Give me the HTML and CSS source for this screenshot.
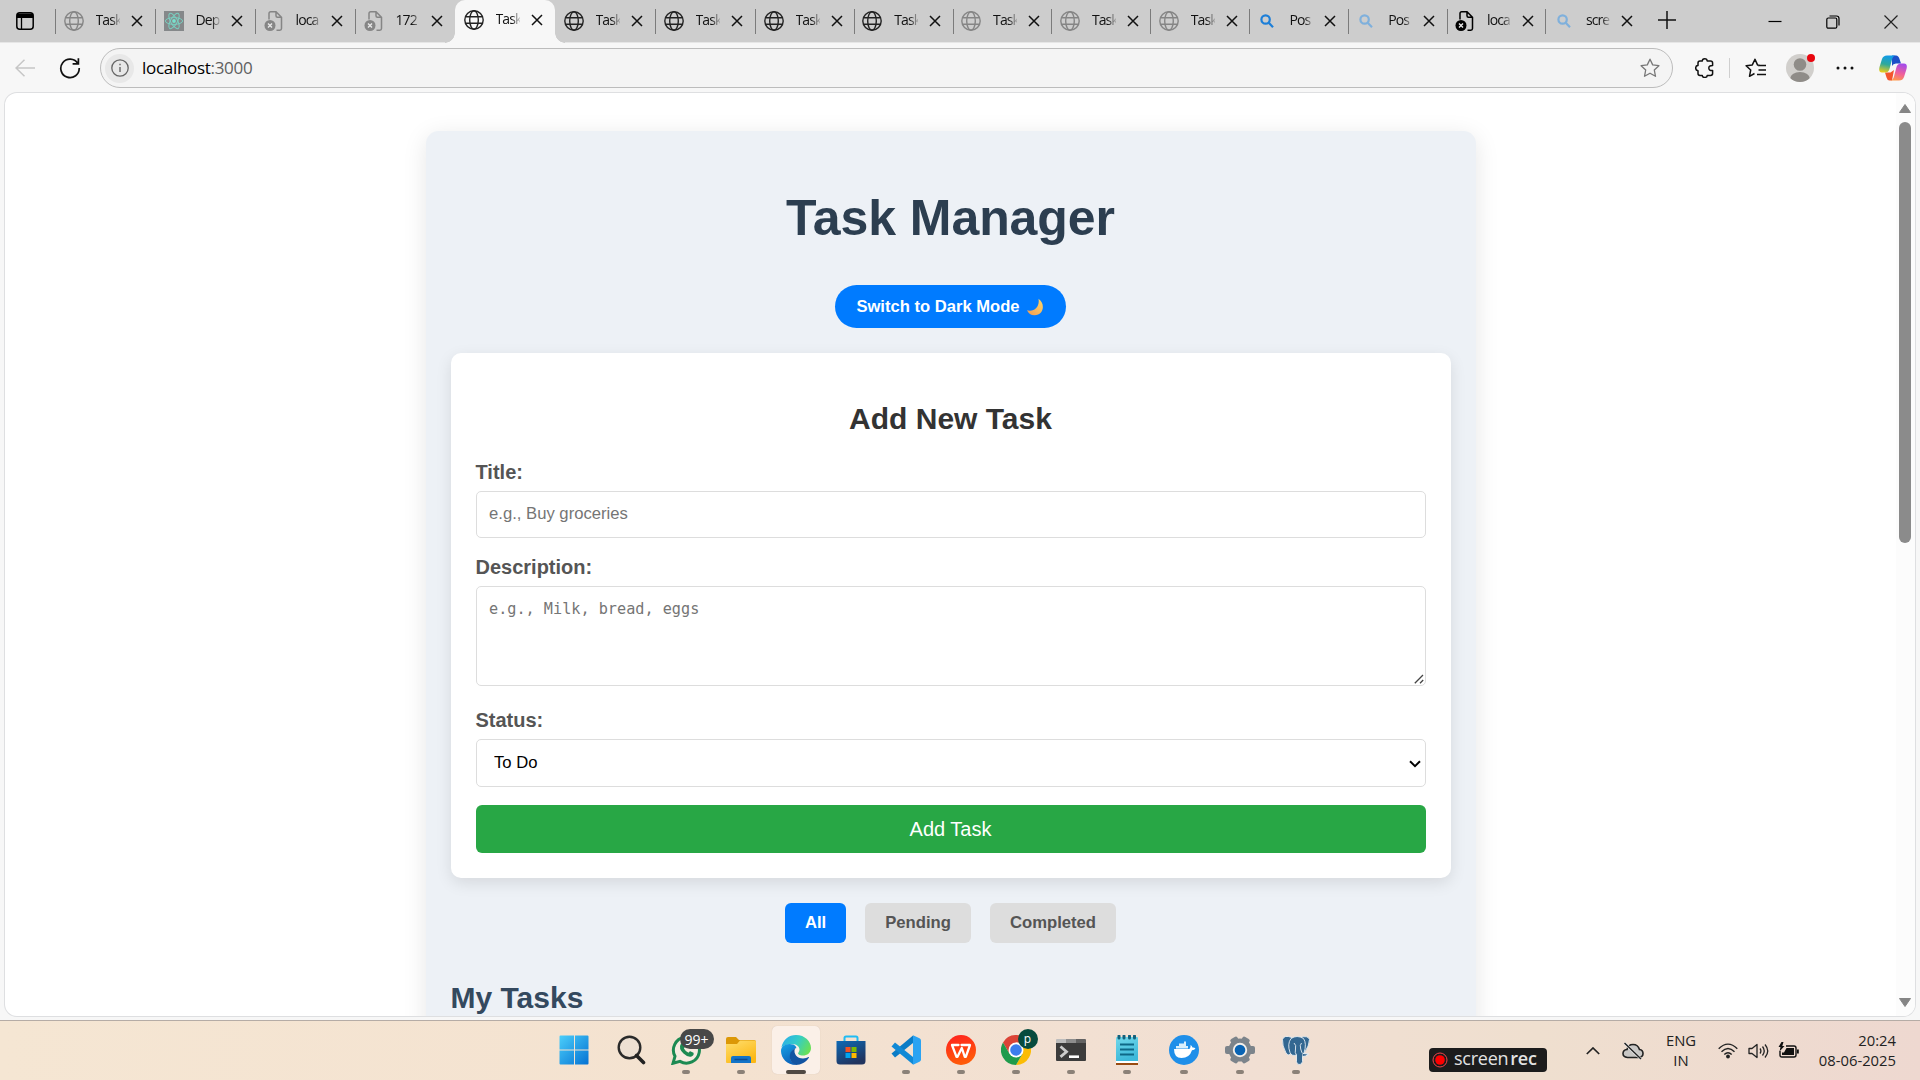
FILE: index.html
```html
<!DOCTYPE html>
<html lang="en">
<head>
<meta charset="utf-8">
<title>Task Manager</title>
<link rel="stylesheet" href="styles.css">
</head>
<body>
<svg class="defs" width="0" height="0" aria-hidden="true">
  <symbol id="globe" viewBox="0 0 20 20"><g fill="none" stroke="currentColor" stroke-width="1.4"><circle cx="10" cy="10" r="9.2"/><ellipse cx="10" cy="10" rx="4.3" ry="9.2"/><path d="M1.6 6.8h16.8M1.6 13.2h16.8"/></g></symbol>
  <symbol id="doc" viewBox="0 0 20 20"><path d="M5 8.500V2.500Q5 .8 6.700 .8H12L17.500 6.300V17.500Q17.500 19.200 15.800 19.200H12.500M12 1V4.800Q12 6.300 13.500 6.300H17.300" fill="none" stroke="currentColor" stroke-width="1.500"/><circle cx="6" cy="14.500" r="5.500" fill="currentColor"/><path d="M4 12.500l4 4M8 12.500l-4 4" stroke="#e8e8e8" stroke-width="1.400"/></symbol>
  <symbol id="react" viewBox="0 0 20 20"><path fill="#85888a" d="M0 0h20v20H0z"/><g fill="none" stroke="#79cfc0" stroke-width="1"><ellipse cx="10" cy="10" rx="8.600" ry="3.400"/><ellipse cx="10" cy="10" rx="8.600" ry="3.400" transform="rotate(60 10 10)"/><ellipse cx="10" cy="10" rx="8.600" ry="3.400" transform="rotate(120 10 10)"/></g><circle cx="10" cy="10" r="1.900" fill="#79e0cc"/></symbol>
  <symbol id="find" viewBox="0 0 20 20"><g fill="none" stroke="currentColor" stroke-width="2.200"><circle cx="8.600" cy="8.500" r="4.200"/><path d="M11.700 11.800l4.300 4.400"/></g></symbol>
  <symbol id="x" viewBox="0 0 12 12"><path d="M1 1l10 10M11 1L1 11" fill="none" stroke="currentColor" stroke-width="1.500"/></symbol>
</svg>

<header class="tabstrip">
  <div class="workspace"><svg width="18" height="18" viewBox="0 0 18 18"><rect x=".8" y=".8" width="16.400" height="16.400" rx="3" fill="none" stroke="#000" stroke-width="1.500"/><path d="M1 1.500h16v4.500H1z"/><path d="M5.500 6v11" stroke="#000" stroke-width="1.300"/></svg></div>
  <div class="tab"><svg class="fav dim"><use href="#globe"/></svg><span class="name">Task</span><svg class="close"><use href="#x"/></svg></div>
  <div class="tab"><svg class="fav"><use href="#react"/></svg><span class="name">Dep</span><svg class="close"><use href="#x"/></svg></div>
  <div class="tab"><svg class="fav dim"><use href="#doc"/></svg><span class="name">loca</span><svg class="close"><use href="#x"/></svg></div>
  <div class="tab"><svg class="fav dim"><use href="#doc"/></svg><span class="name">172</span><svg class="close"><use href="#x"/></svg></div>
  <div class="tab active"><svg class="fav"><use href="#globe"/></svg><span class="name">Task</span><svg class="close"><use href="#x"/></svg></div>
  <div class="tab after-active"><svg class="fav"><use href="#globe"/></svg><span class="name">Task</span><svg class="close"><use href="#x"/></svg></div>
  <div class="tab"><svg class="fav"><use href="#globe"/></svg><span class="name">Task</span><svg class="close"><use href="#x"/></svg></div>
  <div class="tab"><svg class="fav"><use href="#globe"/></svg><span class="name">Task</span><svg class="close"><use href="#x"/></svg></div>
  <div class="tab"><svg class="fav"><use href="#globe"/></svg><span class="name">Task</span><svg class="close"><use href="#x"/></svg></div>
  <div class="tab"><svg class="fav dim"><use href="#globe"/></svg><span class="name">Task</span><svg class="close"><use href="#x"/></svg></div>
  <div class="tab"><svg class="fav dim"><use href="#globe"/></svg><span class="name">Task</span><svg class="close"><use href="#x"/></svg></div>
  <div class="tab"><svg class="fav dim"><use href="#globe"/></svg><span class="name">Task</span><svg class="close"><use href="#x"/></svg></div>
  <div class="tab"><svg class="fav blue"><use href="#find"/></svg><span class="name">Pos</span><svg class="close"><use href="#x"/></svg></div>
  <div class="tab"><svg class="fav pale"><use href="#find"/></svg><span class="name">Pos</span><svg class="close"><use href="#x"/></svg></div>
  <div class="tab"><svg class="fav black"><use href="#doc"/></svg><span class="name">loca</span><svg class="close"><use href="#x"/></svg></div>
  <div class="tab"><svg class="fav pale"><use href="#find"/></svg><span class="name">scre</span><svg class="close"><use href="#x"/></svg></div>
  <div class="newtab"><svg width="18" height="18" viewBox="0 0 18 18"><path d="M9 0v18M0 9h18" stroke="#111" stroke-width="1.500"/></svg></div>
  <div class="winctl">
    <svg width="14" height="14" viewBox="0 0 14 14"><path d="M.5 6.500h13" stroke="#000" stroke-width="1.200"/></svg>
    <svg width="14" height="14" viewBox="0 0 14 14"><g fill="none" stroke="#000" stroke-width="1.200"><rect x=".8" y="3" width="10" height="10.200" rx="1.500"/><path d="M3.500 1h7Q13 1 13 3.500v7"/></g></svg>
    <svg width="14" height="14" viewBox="0 0 14 14"><path d="M.5 .5l13 13M13.500 .5l-13 13" stroke="#222" stroke-width="1.200"/></svg>
  </div>
</header>

<nav class="toolbar">
  <svg class="back" width="20" height="18" viewBox="0 0 20 18"><path d="M9.500 .8L1 9l8.500 8.200M1 9h19" fill="none" stroke="#c6c6c6" stroke-width="1.500"/></svg>
  <svg class="reload" width="22" height="22" viewBox="0 0 22 22"><path d="M18.800 6.500A9.200 9.200 0 1 0 20.200 11M19.400 1.200V6.800H13.600" fill="none" stroke="#111" stroke-width="1.700"/></svg>
  <div class="address">
    <span class="info"><svg width="18" height="18" viewBox="0 0 18 18"><circle cx="9" cy="9" r="8.200" fill="none" stroke="#666" stroke-width="1.300"/><path d="M9 8v5M9 4.800v1.500" stroke="#666" stroke-width="1.400"/></svg></span>
    <span class="url">localhost<span class="port">:3000</span></span>
    <svg width="20" height="20" viewBox="0 0 20 20"><path d="M10 1.200l2.700 5.700 6.200.8-4.600 4.300 1.200 6.300L10 15.200l-5.500 3.100 1.200-6.300L1.100 7.700l6.200-.8z" fill="none" stroke="#777" stroke-width="1.300" stroke-linejoin="round"/></svg>
  </div>
  <svg class="ext" width="20" height="20" viewBox="0 0 20 20"><path d="M3 5Q3 3 5 3H7.300Q7.300 .8 9.700 .8T12.200 3H15.500Q17.600 3 17.600 5V7.500Q13.800 7.400 13.800 10.100T17.600 12.600V15.500Q17.600 17.400 15.500 17.400H12.200Q12.200 19.400 9.700 19.400T7.300 17.400H5Q3 17.400 3 15.500V12.700Q.7 12.600 .7 10.100T3 7.600Z" fill="none" stroke="#111" stroke-width="1.500" stroke-linejoin="round"/></svg>
  <i class="sep"></i>
  <svg class="favs" width="21" height="20" viewBox="0 0 21 20"><path d="M14.500 7.200L12.500 6.900 10 1.200 7.300 6.900 1.100 7.700 5.700 12 4.500 18.300 9.500 15.500M13 7.500h8M13.500 12h7.500M12 16.500h9" fill="none" stroke="#111" stroke-width="1.500" stroke-linejoin="round"/></svg>
  <svg class="avatar" width="30" height="30" viewBox="0 0 30 30"><defs><clipPath id="av"><circle cx="14" cy="15" r="14"/></clipPath></defs><circle cx="14" cy="15" r="14" fill="#d1cfcc"/><g fill="#8f8c88" clip-path="url(#av)"><circle cx="14" cy="11.500" r="6.300"/><ellipse cx="14" cy="26" rx="10" ry="7"/></g><circle cx="25" cy="5" r="4" fill="#e8060f"/></svg>
  <svg class="more" width="18" height="4" viewBox="0 0 18 4"><g fill="#111"><circle cx="2" cy="2" r="1.500"/><circle cx="9" cy="2" r="1.500"/><circle cx="16" cy="2" r="1.500"/></g></svg>
  <svg class="copilot" width="28" height="26" viewBox="0 0 28 26">
    <defs>
      <linearGradient id="c1" x1=".4" y1="0" x2=".2" y2="1"><stop offset="0" stop-color="#119be8"/><stop offset=".5" stop-color="#2fa99a"/><stop offset="1" stop-color="#f5cf13"/></linearGradient>
      <linearGradient id="c2" x1=".6" y1="0" x2=".3" y2="1"><stop offset="0" stop-color="#a44bea"/><stop offset=".55" stop-color="#f0609a"/><stop offset="1" stop-color="#ff9a48"/></linearGradient>
    </defs>
    <path fill="#1c50c8" d="M13 .5h4Q19.500 .5 20.500 4L22 8.500h-5Q14 8.500 13 11z"/>
    <path fill="#f4552d" d="M6 17.500h5.500L15 15l-2 10.500h-2.500Q8.300 25.500 7.500 22.500z"/>
    <path fill="url(#c1)" d="M8 .5h8.500Q13.800 1 13 4.500L10.500 14q-1 3.500-4.500 3.500H3Q-.8 17.500 .5 12L3 4Q4.200 .5 8 .5z"/>
    <path fill="url(#c2)" d="M20 25.500h-8.500q2.700-.5 3.500-4L17.500 12q1-3.500 4.500-3.500h3q3.800 0 2.500 5.500L25 22q-1.200 3.500-5 3.500z"/>
  </svg>
</nav>

<div class="frame">
  <main class="page">
    <div class="container">
      <h1>Task Manager</h1>
      <button class="toggle">Switch to Dark Mode <svg width="18" height="18" viewBox="0 0 18 18"><defs><linearGradient id="mn" x1="1" y1="0" x2="0" y2="1"><stop offset="0" stop-color="#fbd86a"/><stop offset="1" stop-color="#f09a52"/></linearGradient></defs><path d="M12.500 .8C19.500 5.500 18 17 8.500 17.200 5 17.200 2.200 15.300 1 12.200 8 14.300 14 8.800 12.500 .8z" fill="url(#mn)"/></svg></button>
      <form class="card">
        <h2>Add New Task</h2>
        <label for="title">Title:</label>
        <input id="title" type="text" placeholder="e.g., Buy groceries">
        <label for="desc">Description:</label>
        <div class="field area"><textarea id="desc" placeholder="e.g., Milk, bread, eggs"></textarea><svg class="grip" width="10" height="10" viewBox="0 0 10 10"><path d="M.8 9.200L9 1M6 9.200L9.200 6" stroke="#444" stroke-width="1.300"/></svg></div>
        <label for="status">Status:</label>
        <div class="field"><select id="status"><option>To Do</option></select><svg class="chev" width="12" height="8" viewBox="0 0 12 8"><path d="M1 1.200l5 5 5-5" fill="none" stroke="#000" stroke-width="2"/></svg></div>
        <button class="add" type="button">Add Task</button>
      </form>
      <div class="filters"><button class="on">All</button><button>Pending</button><button>Completed</button></div>
      <h2 class="mine">My Tasks</h2>
    </div>
  </main>
  <aside class="scroll">
    <svg width="14" height="11" viewBox="0 0 14 11"><path d="M7 1.500L12.500 9.500H1.500z" fill="#858585" stroke="#858585" stroke-linejoin="round"/></svg>
    <i class="thumb"></i>
    <svg class="down" width="14" height="11" viewBox="0 0 14 11"><path d="M7 9.500L12.500 1.500H1.500z" fill="#858585" stroke="#858585" stroke-linejoin="round"/></svg>
  </aside>
</div>

<footer class="taskbar">
  <div class="apps">
    <div class="app"><svg viewBox="0 0 30 30"><defs><linearGradient id="w" gradientUnits="userSpaceOnUse" x1="0" y1="0" x2="30" y2="30"><stop offset="0" stop-color="#4cd0fb"/><stop offset="1" stop-color="#0370d2"/></linearGradient></defs><path fill="url(#w)" d="M1.500 .5H15V14.500H.5V1.500q0-1 1-1zM16 .5h12.500q1 0 1 1v13H16zM.5 15.500H15v14H1.500q-1 0-1-1zM16 15.500h13.500v13q0 1-1 1H16z"/></svg></div>
    <div class="app"><svg viewBox="0 0 30 30"><circle cx="13.500" cy="12.500" r="10.800" fill="#e7ddd3" fill-opacity=".6" stroke="#2a2a2a" stroke-width="2.400"/><path d="M20.500 20.500l7 7" stroke="#222" stroke-width="3.600" stroke-linecap="round"/></svg></div>
    <div class="app run"><svg viewBox="0 0 30 30"><path d="M2 28.300l2-7A13 13 0 1 1 9 26.400z" fill="#f7ebe0" stroke="#1c8a52" stroke-width="3"/><path d="M10 8.500q2-1.500 3 .8l.8 2q.4 1-.9 2.200 1.800 3.200 4.600 4.200 1.400-1.800 2.300-1.300l2.700 1.400q.8 2.700-2 3.700-3.800 1-8-3Q7 13.500 10 8.500z" fill="#1c8a52"/></svg><span class="badge count">99+</span></div>
    <div class="app run"><svg viewBox="0 0 30 30"><defs><linearGradient id="fo" x2=".6" y2="1"><stop offset="0" stop-color="#ffdf70"/><stop offset="1" stop-color="#fcb814"/></linearGradient></defs><path fill="#dc9807" d="M0 4q0-2 2-2h8l3 3h15q2 0 2 2v4H0z"/><path fill="url(#fo)" d="M0 9h11l3-3.500h14.500Q30 5.500 30 7v20q0 1-1 1H1q-1 0-1-1z"/><path fill="#1374c8" d="M5 28v-5q0-2 2-2h16q2 0 2 2v5z"/><path stroke="#0c4c93" stroke-width="1.500" d="M8.500 24.500h13"/></svg></div>
    <div class="app run current"><svg viewBox="0 0 30 30"><defs><linearGradient id="e1" x1="0" y1=".2" x2="1" y2=".6"><stop offset="0" stop-color="#2badea"/><stop offset=".5" stop-color="#34cdc7"/><stop offset="1" stop-color="#69e055"/></linearGradient><linearGradient id="e2" x2=".4" y2="1"><stop offset="0" stop-color="#16a4e7"/><stop offset="1" stop-color="#0c63bb"/></linearGradient></defs><path fill="url(#e1)" d="M.4 12.500C2 4.500 8 0 15 0c9 0 15 6.500 15 13 0 5-4 7.500-8 7.500-3.500 0-6-1.500-4.500-3 3-4-1-9-7-8.500C6 9.300 2 10.500 .4 12.500z"/><path fill="url(#e2)" d="M12.500 9.500C5 7.500 0 11 0 16c0 7 6 14 15 14-5-2-7-7-5-11.500 1-3 3-4.500 5.500-5.500Q15 10.500 12.500 9.500z"/><path fill="#1254a2" d="M14 13.500c-2 5 2 10 8 10 2.500 0 4-.8 5.500-1.500.5-.2.700.2.500.6C25 27.500 20 30 15 30c-7-1.500-9-13-1-16.500z"/></svg></div>
    <div class="app"><svg viewBox="0 0 30 30"><defs><linearGradient id="st" x2=".5" y2="1"><stop offset="0" stop-color="#0d69b5"/><stop offset="1" stop-color="#21345f"/></linearGradient></defs><path d="M8.500 7V3q0-1.500 1.500-1.500h10q1.500 0 1.500 1.500v4" fill="none" stroke="#20bcf4" stroke-width="2"/><path fill="url(#st)" d="M.5 6h29v20q0 3.500-3.500 3.500H4Q.5 29.500 .5 26z"/><path fill="#f25022" d="M9.500 12h5v5h-5z"/><path fill="#7fba00" d="M15.500 12h5v5h-5z"/><path fill="#00a4ef" d="M9.500 18h5v5h-5z"/><path fill="#ffb900" d="M15.500 18h5v5h-5z"/></svg></div>
    <div class="app run"><svg viewBox="0 0 30 30"><path fill="#0a7cc6" d="M.5 18.500L22 .5v7.500L4 22.500z"/><path fill="#1089d6" d="M.5 11.500L4 7.500 22 22v7.500z"/><path fill="#2ba3f2" d="M22 .3l6.500 3Q30 4 30 5.500v19q0 1.500-1.500 2.200L22 29.700z"/></svg></div>
    <div class="app run"><svg viewBox="0 0 30 30"><defs><linearGradient id="wp" x2=".3" y2="1"><stop offset="0" stop-color="#ff2020"/><stop offset="1" stop-color="#ff5a08"/></linearGradient></defs><circle cx="15" cy="15" r="15" fill="url(#wp)"/><path d="M12.500 10H6l4.500 11.800h1L15.800 13l3 8.800h1L24 10h-8.500" fill="none" stroke="#fff" stroke-width="2.300" stroke-linejoin="round" stroke-linecap="round"/></svg></div>
    <div class="app run"><svg viewBox="0 0 30 30"><path fill="#db4437" d="M2 7.500A15 15 0 0 1 28 7.500H15L8.500 18.800z"/><path fill="#fbbc05" d="M28 7.500A15 15 0 0 1 15 30l6.500-11.200L21 7.500z"/><path fill="#1f9b4c" d="M2 7.500A15 15 0 0 0 15 30l6.500-11.200H8.500z"/><circle cx="15" cy="15" r="7.500" fill="#fff"/><circle cx="15" cy="15" r="5.800" fill="#3b7ded"/></svg><span class="badge user">p</span></div>
    <div class="app run"><svg viewBox="0 0 30 30"><path fill="#3c3c3c" d="M0 5h30v20q0 1-1 1H1q-1 0-1-1z"/><path fill="#bdbdbd" d="M1 4h9v4H0V5q0-1 1-1z"/><path fill="#8e8e8e" d="M10 4h10v4H10z"/><path fill="#636363" d="M20 4h9q1 0 1 1v3H20z"/><path d="M4.500 11.500l6 5.200-6 5.200" fill="none" stroke="#ccc" stroke-width="2.800"/><path d="M13 21.700h10" stroke="#fff" stroke-width="2.600"/></svg></div>
    <div class="app run"><svg viewBox="0 0 30 30"><defs><linearGradient id="np" x2=".3" y2="1"><stop offset="0" stop-color="#71d8eb"/><stop offset="1" stop-color="#3db9da"/></linearGradient></defs><path fill="#984b11" d="M4 26h22v4H4z"/><path fill="#fff" d="M4 26h22v2H4z"/><path fill="url(#np)" d="M5 2h20q1 0 1 1v23H4V3q0-1 1-1z"/><path d="M7 1v2M12 1v2M17.500 1v2M22.500 1v2" stroke="#12617c" stroke-width="3" stroke-linecap="round"/><path d="M8 9.500h14M8 14.500h14M8 19.500h14" stroke="#0e6887" stroke-width="2"/></svg></div>
    <div class="app run"><svg viewBox="0 0 30 30"><circle cx="15" cy="15" r="15" fill="#1f8fe9"/><path fill="#fff" d="M5 14h15.500q1.500-2 1-4 1.500.8 2 2.500 1.500-.3 3 .7-1 2-3.500 2-2.500 7.800-10.500 7.800Q5 23 5 14z"/><path fill="#d9effc" d="M7 11h12v2.500H7zM10 8.500h7V11h-7zM15 6.500h2v2h-2z"/></svg></div>
    <div class="app run"><svg viewBox="0 0 30 30"><g fill="#7c848b"><circle cx="15" cy="15" r="11.500"/><rect x="11" y="1" width="8" height="28" rx="2" transform="rotate(30 15 15)"/><rect x="11" y="0" width="8" height="30" rx="2" transform="rotate(90 15 15)"/><rect x="11" y="1" width="8" height="28" rx="2" transform="rotate(150 15 15)"/></g><circle cx="15" cy="15" r="7.200" fill="#f3efea"/><circle cx="15" cy="15" r="5.300" fill="#0964b4"/></svg></div>
    <div class="app run"><svg viewBox="0 0 30 30"><g fill="#336791" stroke="#e8eef3" stroke-width=".9" stroke-linejoin="round"><path d="M11 2.500Q3-.5 1.500 4.500q-.5 6 3.500 13.500 2 3.500 4.500 1l3-4z"/><path d="M19 2.500q8-2.500 9.500 2 0 6-5.500 14l-5-3z"/><path d="M10 3.500q6-4 12.500 0 3.500 5 .5 14.500l-1.500 2v6.500q-.5 3.500-3.500 3-2.500-.5-2.500-3V20q-5 1.500-6.500-2.500Q6 9 10 3.500z"/><path d="M22 18.500l5.500.5q-2 2.500-6 2.500" stroke-width="1.200"/><path d="M13 8q2.500 2 1.500 6t1 6M20.500 8q-2 2-.8 6t1.800 4.500" fill="none"/></g></svg></div>
  </div>
  <div class="rec"><svg width="16" height="16" viewBox="0 0 16 16"><circle cx="8" cy="8" r="7" fill="none" stroke="#f0444a"/><circle cx="8" cy="8" r="4.800" fill="#f00"/></svg><span>screen<b>rec</b></span></div>
  <div class="tray">
    <svg class="up" width="14" height="8" viewBox="0 0 14 8"><path d="M.8 7L7 1l6.200 6" fill="none" stroke="#222" stroke-width="1.700"/></svg>
    <svg class="cloud" width="22" height="18" viewBox="0 0 22 18"><path d="M5.500 15.500Q1 15 1 11.500T5 7.500Q6 2.500 11 2.500t6.500 5Q21 8 21 11.500t-4 4z" fill="#c9c7c5" stroke="#222" stroke-width="1.600"/><path d="M2.500 1l16.500 16" stroke="#eee" stroke-width="2.500"/><path d="M2.500 1l16.500 16" stroke="#222" stroke-width="1.500"/></svg>
    <div class="lang"><span>ENG</span><span>IN</span></div>
    <svg class="wifi" width="20" height="16" viewBox="0 0 20 16"><g fill="none" stroke="#222" stroke-width="1.400"><path d="M.7 5.800Q10-3.500 19.300 5.800M3.500 8.800q6.500-6.500 13 0M6.300 11.500q3.700-3.700 7.400 0"/></g><circle cx="10" cy="13.500" r="1.900" fill="#222"/></svg>
    <svg class="vol" width="21" height="16" viewBox="0 0 21 16"><g fill="none" stroke="#222" stroke-width="1.300" stroke-linejoin="round"><path d="M1 5.500h3L9 1.500v13L4 10.500H1zM12 5.500q1.800 2.500 0 5M14.500 3.500q3.500 4.500 0 9M17 1.500q5.500 6.500 0 13"/></g></svg>
    <svg class="bat" width="21" height="17" viewBox="0 0 21 17"><path d="M8 4h8q2 0 2 2v7q0 2-2 2H4q-2 0-2-2V9" fill="none" stroke="#111" stroke-width="1.400"/><path d="M8.500 6H16v7H4V10.500h2zM19 7.500h1.800v4H19zM3.500 0L.5 5h2L1.500 9.500 6.500 4H4.300L5.500 0z" fill="#111"/></svg>
    <div class="clock"><span>20:24</span><span>08-06-2025</span></div>
  </div>
</footer>
</body>
</html>
```
FILE: styles.css
```css
* { box-sizing: border-box; }
body {
  margin: 0;
  width: 1920px;
  height: 1080px;
  overflow: hidden;
  display: flex;
  flex-direction: column;
  background: #f7f7f7;
  font-family: "Open Sans", "Noto Sans", sans-serif;
}
svg { display: block; flex: none; }
.defs { position: absolute; }

/* tab strip */
.tabstrip {
  height: 43px;
  flex: none;
  display: grid;
  grid-template-columns: 55px repeat(7, 100px) repeat(9, 98.8px) 45px 1fr;
  background: #cdcdcd;
  border-bottom: 1px solid #e6e6e6;
}
.workspace { display: flex; align-items: center; padding-left: 16px; padding-bottom: 2px; }
.tab {
  display: flex;
  align-items: center;
  padding: 0 0 2px 8.500px;
  background: linear-gradient(#7b7b7b, #7b7b7b) 0 9px / 1px 25px no-repeat;
  color: #111;
}
.tab.active {
  position: relative;
  height: 43px;
  padding-bottom: 3px;
  background: #f7f7f7;
  border-radius: 10px 10px 0 0;
}
.tab.active::before, .tab.active::after {
  content: "";
  position: absolute;
  bottom: 0;
  width: 10px;
  height: 10px;
}
.tab.active::before { left: -10px; background: radial-gradient(circle at 0 0, #cdcdcd 9.5px, #f7f7f7 10px); }
.tab.active::after { right: -10px; background: radial-gradient(circle at 100% 0, #cdcdcd 9.5px, #f7f7f7 10px); }
.tab.after-active { background: none; }
.fav { width: 20px; height: 20px; color: #222; }
.fav.dim { color: #858585; }
.fav.blue { color: #1d7fd8; }
.fav.pale { color: #7fb0dc; }
.fav.black { color: #000; }
.name {
  width: 24px;
  margin: -2px 0 0 12px;
  overflow: hidden;
  white-space: nowrap;
  font-size: 14px;
  letter-spacing: -.9px;
  line-height: 22px;
  -webkit-mask: linear-gradient(90deg, #000 65%, rgba(0, 0, 0, .15));
  mask: linear-gradient(90deg, #000 65%, rgba(0, 0, 0, .15));
}
.close { width: 12px; height: 12px; margin-left: 11px; color: #111; }
.newtab { display: flex; align-items: center; padding: 0 0 3px 14px; }
.winctl { display: flex; align-items: center; justify-content: flex-end; gap: 44px; padding-right: 22px; }

/* toolbar */
.toolbar { height: 50px; flex: none; display: flex; align-items: center; padding-left: 15px; }
.reload { margin-left: 24px; }
.address {
  width: 1573px;
  height: 40px;
  margin-left: 19px;
  padding: 0 12px 0 4px;
  display: flex;
  align-items: center;
  border: 1px solid #bcbcbc;
  border-radius: 20px;
  background: #f4f4f4;
}
.info { width: 29px; height: 29px; border-radius: 50%; background: #e8e8e8; display: grid; place-items: center; }
.url { flex: 1; margin: -2px 0 0 8px; font-size: 17px; letter-spacing: -.3px; color: #000; }
.port { color: #606060; }
.ext { margin-left: 22px; }
.sep { width: 1px; height: 20px; margin-left: 14px; background: #cfcfcf; }
.favs { margin-left: 15px; }
.avatar { margin-left: 20px; }
.more { margin-left: 20px; }
.copilot { margin-left: 25px; }

/* browser viewport */
.frame {
  height: 923px;
  flex: none;
  margin: 0 5px;
  display: flex;
  overflow: hidden;
  border-radius: 12px;
  background: #fff;
  box-shadow: 0 0 0 1px #dedfe1;
}
.page {
  flex: 1;
  padding-top: 38px;
  overflow: hidden;
  font-family: "Liberation Sans", Arial, sans-serif;
}
.container {
  width: 1050px;
  height: 1400px;
  margin: 0 auto;
  padding: 25px;
  display: flex;
  flex-direction: column;
  border-radius: 12.500px;
  background: #edf1f6;
  box-shadow: 0 5px 25px rgba(0, 0, 0, .1);
}
h1 { margin: 33px 0 38px; font-size: 50px; line-height: 58px; letter-spacing: -.08px; text-align: center; color: #2c3e50; }
button { border: 0; font-family: inherit; font-size: 16.667px; font-weight: bold; }
.toggle {
  width: 231px;
  height: 43px;
  padding: 1px 1px 0 0;
  align-self: center;
  display: flex;
  align-items: center;
  justify-content: center;
  gap: 6px;
  border-radius: 22px;
  background: #007bff;
  color: #fff;
  font-size: 16.600px;
}
.card {
  height: 525px;
  flex: none;
  margin-top: 25px;
  padding: 25px;
  display: flex;
  flex-direction: column;
  border-radius: 10px;
  background: #fff;
  box-shadow: 0 5px 16px rgba(0, 0, 0, .1);
}
h2 { margin: 23px 0 25px; font-size: 30px; line-height: 35px; text-align: center; color: #333; }
label { margin-bottom: 7px; font-size: 20px; line-height: 23px; font-weight: bold; color: #555; }
input, textarea, select {
  display: block;
  width: 100%;
  margin: 0;
  padding: 12px 12.500px;
  border: 1px solid #ddd;
  border-radius: 5px;
  background: #fff;
  font-family: inherit;
  font-size: 16.667px;
}
input::placeholder, textarea::placeholder { color: #757575; }
input { height: 47px; margin-bottom: 18px; padding-bottom: 14px; }
.field { position: relative; }
.area { margin-bottom: 23px; }
textarea { height: 100px; resize: none; font-family: "DejaVu Sans Mono", monospace; font-size: 15.200px; line-height: 20px; }
.grip { position: absolute; right: 2px; bottom: 2px; }
select { height: 48px; padding: 0 17.500px 2px; appearance: none; color: #000; }
.chev { position: absolute; right: 5px; top: 21px; }
.add { height: 48px; margin-top: 18px; border-radius: 6px; background: #28a745; color: #fff; font-size: 20px; font-weight: normal; }
.filters { display: flex; justify-content: center; gap: 19px; margin-top: 25px; }
.filters button { height: 40px; padding: 0 20px; border-radius: 6px; background: #ddd; color: #555; }
.filters .on { background: #007bff; color: #fff; }
.mine { margin: 37px 0 0; text-align: left; color: #34495e; }

.scroll { width: 19px; padding: 10px 1px 0 0; display: flex; flex-direction: column; align-items: center; background: #fcfcfc; }
.thumb { width: 12px; height: 421px; margin-top: 8px; border-radius: 6px; background: #8b8b8b; }
.down { margin: auto 0 8px; }

/* taskbar */
.taskbar {
  height: 60px;
  margin-top: 4px;
  flex: none;
  display: flex;
  border-top: 1px solid #b5aca6;
  background: linear-gradient(90deg, #f5e6d3, #f4e2d0 38%, #f1dfd3 65%, #efdfcf 80%, #eed8d0);
  color: #222;
}
.apps {
  margin-left: 545.500px;
  display: grid;
  grid-template-columns: 57px 56px 55px 55px 54.500px 55px 55.500px 55px 55px 55.500px 56px 57px 56.500px 55px;
}
.app { position: relative; display: flex; flex-direction: column; align-items: center; padding-top: 14px; }
.app > svg { width: 30px; height: 30px; z-index: 1; }
.run::after { content: ""; width: 8px; height: 4px; margin-top: 5px; border-radius: 2px; background: #8b8178; z-index: 1; }
.current::before {
  content: "";
  position: absolute;
  inset: 5px 3px 6px;
  border-radius: 5px;
  background: #fbf0e8;
  box-shadow: 0 0 1px #cdbcb0;
}
.current::after { width: 20px; background: #504943; }
.badge { position: absolute; z-index: 2; top: 8px; display: grid; place-items: center; height: 20px; color: #fff; }
.count { left: 21px; width: 34px; border-radius: 10px; background: #484848; font-size: 14px; }
.user { left: 29px; width: 20px; border-radius: 50%; background: #064b3e; font-size: 12px; line-height: 12px; }
.rec {
  width: 118px;
  height: 24px;
  margin: 27px 0 0 105.500px;
  padding-left: 3px;
  display: flex;
  align-items: center;
  gap: 6px;
  border-radius: 4px;
  background: #1c1c1c;
  color: #e2e2e2;
  font-size: 18px;
  letter-spacing: -.25px;
  line-height: 20px;
  white-space: nowrap;
}
.rec b { margin-left: 2px; font-weight: 600; }
.rec span { margin-top: -4px; }
.tray { flex: 1; display: flex; align-items: center; padding-right: 24px; font-size: 14.800px; line-height: 20px; }
.up { margin-left: 39px; }
.cloud { margin-left: 22px; }
.lang { width: 40px; margin: -2px 0 0 17px; display: flex; flex-direction: column; align-items: center; }
.wifi { margin-left: 17px; }
.vol { margin-left: 10px; }
.bat { margin-left: 9px; }
.clock { margin-left: auto; margin-top: -2px; display: flex; flex-direction: column; align-items: flex-end; }
```
